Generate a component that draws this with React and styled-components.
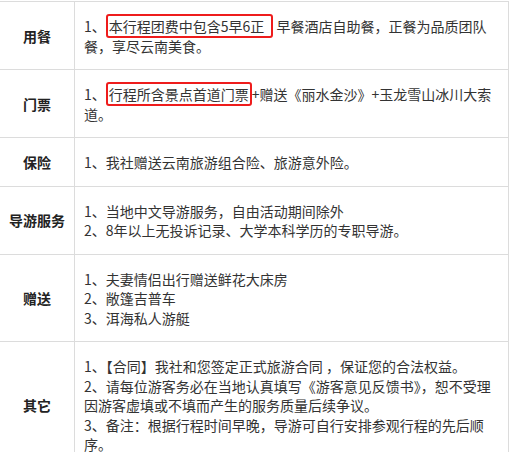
import React from 'react';
import styled, { createGlobalStyle } from 'styled-components';

const GlobalStyle = createGlobalStyle`
  body {
    margin: 0;
    background: #fff;
    overflow: hidden;
  }
`;

const Table = styled.table`
  width: 510px;
  margin: 1px 0 0 -1px;
  border-collapse: collapse;
  font-family: "Noto Sans CJK SC", "Liberation Sans", sans-serif;
  font-size: 14px;
  color: #333;
`;

const Label = styled.td`
  width: 74px;
  padding: 0;
  border: 1px solid #dcdcdc;
  text-align: center;
  vertical-align: middle;
  font-weight: bold;
  color: #222;
`;

const Content = styled.td`
  padding: 15px 5px 13px 9px;
  border: 1px solid #dcdcdc;
  vertical-align: middle;
  line-height: 19.5px;
`;

const Item = styled.div`
  margin: 0;
`;

const Mark = styled.span`
  padding: 0 ${(props) => (props.wide ? '7px' : '1px')} 0 1px;
  border: 2px solid #ee1c1c;
  border-radius: 3px;
`;

const rows = [
  {
    label: '用餐',
    items: [
      <>
        1、<Mark wide>本行程团费中包含5早6正</Mark> 早餐酒店自助餐，正餐为品质团队餐，享尽云南美食。
      </>,
    ],
  },
  {
    label: '门票',
    items: [
      <>
        1、<Mark>行程所含景点首道门票</Mark>+赠送《丽水金沙》+玉龙雪山冰川大索道。
      </>,
    ],
  },
  { label: '保险', items: ['1、我社赠送云南旅游组合险、旅游意外险。'] },
  {
    label: '导游服务',
    items: ['1、当地中文导游服务，自由活动期间除外', '2、8年以上无投诉记录、大学本科学历的专职导游。'],
  },
  {
    label: '赠送',
    items: ['1、夫妻情侣出行赠送鲜花大床房', '2、敞篷吉普车', '3、洱海私人游艇'],
  },
  {
    label: '其它',
    items: [
      '1、【合同】我社和您签定正式旅游合同 ，保证您的合法权益。',
      '2、请每位游客务必在当地认真填写《游客意见反馈书》，恕不受理因游客虚填或不填而产生的服务质量后续争议。',
      '3、备注：根据行程时间早晚，导游可自行安排参观行程的先后顺序。',
    ],
  },
];

const App = () => (
  <>
    <GlobalStyle />
    <Table>
      <tbody>
        {rows.map((row) => (
          <tr key={row.label}>
            <Label>{row.label}</Label>
            <Content>
              {row.items.map((item, i) => (
                <Item key={i}>{item}</Item>
              ))}
            </Content>
          </tr>
        ))}
      </tbody>
    </Table>
  </>
);

export default App;
